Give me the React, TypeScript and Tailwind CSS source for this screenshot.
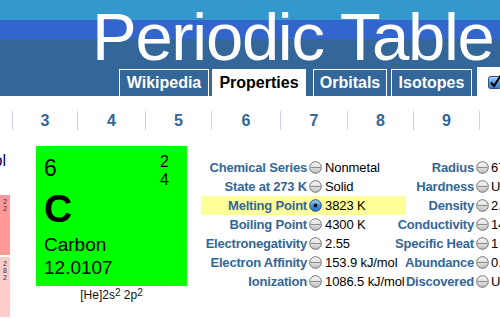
import React from "react";

const columns = [
  { n: "3", w: "w-[65px]" },
  { n: "4", w: "w-[68px]" },
  { n: "5", w: "w-[66px]" },
  { n: "6", w: "w-[69px]" },
  { n: "7", w: "w-[67px]" },
  { n: "8", w: "w-[66px]" },
  { n: "9", w: "w-[66px]" },
];

const rows = [
  { l: "Chemical Series", v: "Nonmetal", r: "Radius", rv: "67 pm" },
  { l: "State at 273 K", v: "Solid", r: "Hardness", rv: "Unknown" },
  { l: "Melting Point", v: "3823 K", r: "Density", rv: "2.267 g/cm³", on: true },
  { l: "Boiling Point", v: "4300 K", r: "Conductivity", rv: "140 W/mK" },
  { l: "Electronegativity", v: "2.55", r: "Specific Heat", rv: "1 J/gK" },
  { l: "Electron Affinity", v: "153.9 kJ/mol", r: "Abundance", rv: "0.02%" },
  { l: "Ionization", v: "1086.5 kJ/mol", r: "Discovered", rv: "Unknown" },
];

const Radio = ({ on = false }: { on?: boolean }) => (
  <svg width="13" height="13" viewBox="0 0 13 13" className="shrink-0">
    <defs>
      <linearGradient id="rg-off" x1="0" y1="0" x2="0" y2="1">
        <stop offset="0" stopColor="#f7f7f7" />
        <stop offset="0.5" stopColor="#e2e2e2" />
        <stop offset="1" stopColor="#bcbcbc" />
      </linearGradient>
      <linearGradient id="rg-on" x1="0" y1="0" x2="0" y2="1">
        <stop offset="0" stopColor="#a9d3fa" />
        <stop offset="0.5" stopColor="#4b95e6" />
        <stop offset="1" stopColor="#2a6fcf" />
      </linearGradient>
    </defs>
    <circle cx="6.5" cy="6.5" r="5.8" fill={on ? "url(#rg-on)" : "url(#rg-off)"} stroke={on ? "#274f86" : "#707070"} strokeWidth="1" />
    {on ? (
      <circle cx="6.5" cy="6.5" r="2" fill="#111" />
    ) : (
      <line x1="1.5" y1="6.5" x2="11.5" y2="6.5" stroke="#8c8c8c" strokeWidth="1" />
    )}
  </svg>
);

export default function App() {
  return (
    <div className="relative h-[318px] w-[500px] overflow-hidden bg-white font-['Liberation_Sans',Arial,sans-serif]">
      <header className="h-[96px] overflow-hidden bg-[linear-gradient(to_bottom,#3399cc_0px,#3399cc_20px,#3366cc_20px,#3366cc_39px,#336699_39px)] pt-[4px]">
        <h1 className="h-[65px] whitespace-nowrap pl-[92px] text-[67px] leading-[66px] tracking-[-1.3px] text-white">
          Periodic Table
        </h1>
        <nav className="flex h-[27px] items-end pl-[119px] text-[16px] font-bold leading-[20px] whitespace-nowrap">
          <div className="flex h-[27px] w-[90px] shrink-0 items-center justify-center border border-b-0 border-white text-white">
            Wikipedia
          </div>
          <div className="ml-[3px] flex h-[27px] w-[94px] shrink-0 items-center justify-center bg-white text-black">
            Properties
          </div>
          <div className="ml-[7px] flex h-[27px] w-[74px] shrink-0 items-center justify-center border border-b-0 border-white text-white">
            Orbitals
          </div>
          <div className="ml-[4px] flex h-[27px] w-[81px] shrink-0 items-center justify-center border border-b-0 border-white text-white">
            Isotopes
          </div>
          <div className="ml-[5px] flex h-[29px] w-[40px] shrink-0 items-center bg-white pl-[11px]">
            <svg width="14" height="15" viewBox="0 0 14 15">
              <defs>
                <linearGradient id="cb" x1="0" y1="0" x2="0" y2="1">
                  <stop offset="0" stopColor="#b5d8fb" />
                  <stop offset="0.5" stopColor="#5a9de8" />
                  <stop offset="1" stopColor="#3a7fd6" />
                </linearGradient>
              </defs>
              <rect x="0.5" y="2.5" width="12" height="12" rx="2" fill="url(#cb)" stroke="#2d4f86" />
              <path d="M3 8.5 L6 12 L13 1" fill="none" stroke="#000" strokeWidth="2" />
            </svg>
          </div>
        </nav>
      </header>

      <div className="mt-[15px] flex h-[19px] items-center">
        <div className="w-[12px] shrink-0" />
        {columns.map((c) => (
          <div
            key={c.n}
            className={`flex h-[19px] shrink-0 items-center justify-center border-l border-[#ccccff] text-[16px] font-bold leading-[19px] text-[#336699] ${c.w}`}
          >
            {c.n}
          </div>
        ))}
        <div className="h-[19px] flex-1 border-l border-[#ccccff]" />
      </div>

      <div className="flex items-start">
        <div className="w-[36px] shrink-0">
          <div className="mt-[22px] flex w-[6px] justify-end overflow-hidden">
            <span className="shrink-0 text-[16px] leading-[18px] text-[#000066]">Symbol</span>
          </div>
          <div className="mt-[25px] flex h-[60px] w-[10px] flex-col items-end bg-[#ff9999] pr-[3px] pt-[3px] text-[7px] leading-[7px] text-[#333]">
            <span>2</span>
            <span>2</span>
          </div>
          <div className="mt-[2px] flex h-[60px] w-[10px] flex-col items-end bg-[#ffcccc] pr-[3px] pt-[3px] text-[7px] leading-[7px] text-[#333]">
            <span>2</span>
            <span>8</span>
            <span>2</span>
          </div>
        </div>

        <div className="mt-[16px] w-[151px] shrink-0">
          <div className="flex h-[140px] flex-col bg-[#00ff00] pl-[8px] pr-[18px] pt-[7px] text-black">
            <div className="flex items-start justify-between">
              <span className="mt-[4px] text-[23px] leading-[23px]">6</span>
              <div className="flex flex-col text-[16px] leading-[18px]">
                <span>2</span>
                <span>4</span>
              </div>
            </div>
            <span className="text-[39px] font-bold leading-[39px]">C</span>
            <span className="mt-[7px] text-[19px] leading-[19px]">Carbon</span>
            <span className="mt-[4px] text-[19px] leading-[19px]">12.0107</span>
          </div>
          <p className="mt-[2px] text-center text-[12px] leading-[14px] text-[#111]">
            [He]2s<sup className="-top-[3px] text-[10px]">2</sup> 2p<sup className="-top-[3px] text-[10px]">2</sup>
          </p>
        </div>

        <div className="ml-[14px] mt-[28px] flex flex-1 flex-col text-[13px] leading-[19px]">
          {rows.map((r) => (
            <div key={r.l} className="flex h-[19px] items-center whitespace-nowrap">
              <div className={`flex h-[19px] w-[205px] shrink-0 items-center ${r.on ? "bg-[#ffff99]" : ""}`}>
                <div className="flex w-[106px] shrink-0 justify-end font-bold tracking-[-0.2px] text-[#336699]">
                  <span className="shrink-0">{r.l}</span>
                </div>
                <div className="ml-[2px]">
                  <Radio on={r.on} />
                </div>
                <span className="ml-[3px] tracking-[-0.1px] text-black">{r.v}</span>
              </div>
              <div className="flex w-[68px] shrink-0 justify-end font-bold tracking-[-0.2px] text-[#336699]">
                <span className="shrink-0">{r.r}</span>
              </div>
              <div className="ml-[2px]">
                <Radio />
              </div>
              <span className="ml-[2px] text-black">{r.rv}</span>
            </div>
          ))}
        </div>
      </div>
    </div>
  );
}
